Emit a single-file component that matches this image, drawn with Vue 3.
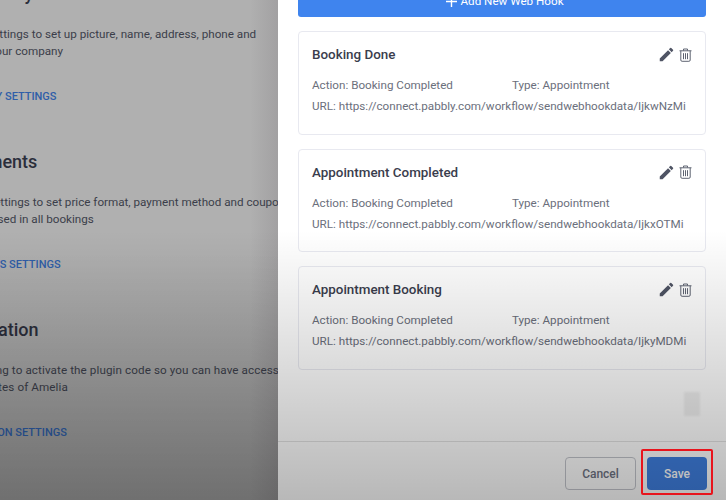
<script setup>
const sections = [
  { title: 'Company', lines: ['Use these settings to set up picture, name, address, phone and', 'website of your company'], link: 'COMPANY SETTINGS', cls: 's1' },
  { title: 'Payments', lines: ['Use these settings to set price format, payment method and coupons', 'that will be used in all bookings'], link: 'PAYMENTS SETTINGS', cls: 's2' },
  { title: 'Integration', lines: ['Use this setting to activate the plugin code so you can have access', 'to all updates of Amelia'], link: 'ACTIVATION SETTINGS', cls: 's3' }
]
const hooks = [
  { name: 'Booking Done', url: 'https://connect.pabbly.com/workflow/sendwebhookdata/IjkwNzMi' },
  { name: 'Appointment Completed', url: 'https://connect.pabbly.com/workflow/sendwebhookdata/IjkxOTMi' },
  { name: 'Appointment Booking', url: 'https://connect.pabbly.com/workflow/sendwebhookdata/IjkyMDMi' }
]
</script>

<template>
  <div class="screen">
    <aside class="settings">
      <section v-for="s in sections" :key="s.title" class="block" :class="s.cls">
        <h2>{{ s.title }}</h2>
        <p v-for="l in s.lines" :key="l">{{ l }}</p>
        <a>{{ s.link }}</a>
      </section>
    </aside>
    <main class="drawer">
      <div class="content">
        <button class="add">
          <svg width="11" height="11" viewBox="0 0 11 11" fill="none" stroke="#fff" stroke-width="1.4"><path d="M5.5 0v11M0 5.5h11"/></svg>
          <span>Add New Web Hook</span>
        </button>
        <article v-for="h in hooks" :key="h.name" class="card">
          <header>
            <h3>{{ h.name }}</h3>
            <div class="icons">
              <svg width="15" height="15" viewBox="2 2 20 20"><path fill="#4f5464" d="M3 17.25V21h3.75L17.81 9.94l-3.75-3.75L3 17.25zM20.71 7.04c.39-.39.39-1.02 0-1.41l-2.34-2.34a.9959.9959 0 0 0-1.41 0l-1.83 1.83 3.75 3.75 1.83-1.83z"/></svg>
              <svg width="13" height="14" viewBox="0 0 13 14" fill="none" stroke="#5f6472" stroke-width="1"><path d="M0.5 2.8h12M4.5 2.6V1h4v1.6M1.8 2.8v9.2a1.3 1.3 0 0 0 1.3 1.3h6.8a1.3 1.3 0 0 0 1.3-1.3V2.8M4.5 5.2v6M6.5 5.2v6M8.5 5.2v6"/></svg>
            </div>
          </header>
          <div class="meta"><span class="action">Action: Booking Completed</span><span>Type: Appointment</span></div>
          <div class="url">URL: {{ h.url }}</div>
        </article>
      </div>
      <footer>
        <button class="cancel">Cancel</button>
        <button class="save">Save</button>
      </footer>
    </main>
    <div class="blob"></div>
    <div class="shade"></div>
    <div class="highlight"></div>
  </div>
</template>

<style>
html, body { margin: 0; background: #fff; }
</style>

<style scoped>
.screen {
  position: relative;
  width: 726px;
  height: 500px;
  overflow: hidden;
  display: flex;
  font-family: Roboto, "Liberation Sans", sans-serif;
  background: #fff;
}
.settings {
  width: 278px;
  flex: none;
  overflow: hidden;
  background:
    linear-gradient(to right, rgba(60,60,60,0) 250px, rgba(60,50,60,.12) 278px),
    linear-gradient(to bottom, rgba(0,0,0,0) 250px, rgba(0,0,0,.12) 500px),
    #b0b0b0;
}
.block {
  width: 420px;
  height: 168px;
  box-sizing: border-box;
}
.block.s1 { margin-top: -21px; }
h2 {
  margin: 0 0 17px -43px;
  height: 30px;
  line-height: 30px;
  font-size: 18px;
  font-weight: 500;
  color: #2b2e3b;
}
.s3 h2 { margin-left: -49px; }
p {
  margin: 0 0 0 -66px;
  font-size: 11.67px;
  line-height: 17px;
  white-space: nowrap;
  color: #3b3e4a;
}
.s1 p { margin-left: -67px; }
.s2 p + p { margin-left: -68px; }
.s3 p { margin-left: -73px; letter-spacing: .1px; }
.s3 p + p { margin-left: -57px; }
a {
  display: block;
  margin: 29px 0 0 -50px;
  font-size: 11px;
  line-height: 16px;
  font-weight: 500;
  color: #2f5ea8;
}
.drawer {
  flex: 1;
  display: flex;
  flex-direction: column;
  min-width: 0;
}
.content {
  flex: 1;
  padding: 0 20px;
  min-height: 0;
}
button {
  font-family: inherit;
  cursor: pointer;
}
.add {
  display: flex;
  align-items: center;
  justify-content: center;
  gap: 3px;
  width: 100%;
  height: 40px;
  margin: -23px 0 14px;
  border: 0;
  border-radius: 3px;
  background: #3f84ee;
  color: #fff;
  font-size: 11.67px;
  padding: 8px 0 0 6px;
}
.card {
  height: 103.5px;
  box-sizing: border-box;
  margin-bottom: 14px;
  padding: 13px 13px 0;
  border: 1px solid #e8e9f0;
  border-radius: 4px;
}
.card header {
  display: flex;
  justify-content: space-between;
  align-items: flex-start;
  height: 20px;
  margin-bottom: 13px;
}
h3 {
  margin: 0;
  font-size: 13.4px;
  line-height: 20px;
  font-weight: 500;
  color: #3a3d4d;
}
.icons {
  display: flex;
  gap: 5px;
  align-items: center;
  margin-top: 2px;
}
.meta, .url {
  font-size: 11.67px;
  line-height: 14px;
  color: #6b6f7c;
  white-space: nowrap;
}
.meta { display: flex; margin-bottom: 7px; }
.action { width: 200px; }
footer {
  flex: none;
  box-sizing: border-box;
  height: 59px;
  border-top: 1px solid #e3e3e3;
  display: flex;
  justify-content: flex-end;
  align-items: flex-start;
  gap: 11px;
  padding: 15px 19px 0 0;
}
footer button {
  height: 33px;
  border-radius: 4px;
  font-size: 12px;
  font-weight: 500;
}
.cancel {
  width: 71px;
  background: transparent;
  border: 1px solid #c3c5cc;
  color: #6f7484;
}
.save {
  width: 60px;
  background: #3f7fe0;
  border: 0;
  color: #fff;
}
.blob {
  position: absolute;
  left: 684px;
  top: 392px;
  width: 16px;
  height: 24px;
  background: #f0f0f0;
  filter: blur(1px);
}
.shade {
  position: absolute;
  inset: 0;
  pointer-events: none;
  background: linear-gradient(to bottom, rgba(0,0,0,0) 230px, rgba(0,0,0,.28) 500px);
}
.highlight {
  position: absolute;
  left: 641px;
  top: 449px;
  width: 72px;
  height: 46px;
  box-sizing: border-box;
  border: 2px solid #e8141c;
  border-radius: 2px;
}
</style>
